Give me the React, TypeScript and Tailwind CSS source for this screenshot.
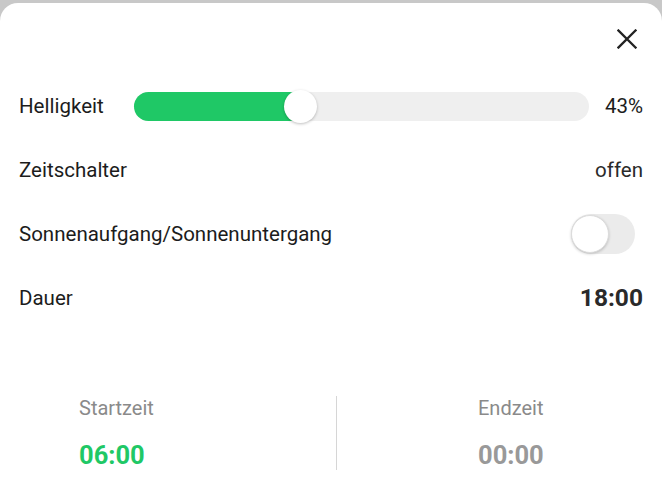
import React from "react";

export default function App() {
  return (
    <div className="w-[662px] h-[500px] bg-[#c8c8c8] pt-[3px] overflow-hidden" style={{ fontFamily: "Roboto, 'Noto Sans', sans-serif" }}>
      <div className="bg-white h-[497px] rounded-t-[18px] flex flex-col">
        <div className="h-[71px] flex justify-end items-start pt-[26px] pr-[25px]">
          <svg width="20" height="20" viewBox="0 0 20 20">
            <path d="M1.5 1.5 L18.5 18.5 M18.5 1.5 L1.5 18.5" stroke="#222" strokeWidth="2.3" strokeLinecap="square" />
          </svg>
        </div>
        <div className="h-[64px] flex items-center pl-[19px] pr-[19px]">
          <span className="text-[20.5px] text-[#1c1c1c] w-[115px]">Helligkeit</span>
          <div className="relative h-[29px] w-[455px] rounded-full bg-[#efefef]">
            <div className="absolute left-0 top-0 h-[29px] w-[170px] rounded-full bg-[#1fc866]" />
            <div className="absolute left-[150px] top-[-2px] w-[33px] h-[33px] rounded-full bg-white shadow-[0_1px_3px_rgba(0,0,0,0.25)]" />
          </div>
          <span className="ml-auto text-[20.5px] text-[#1c1c1c]">43%</span>
        </div>
        <div className="h-[64px] flex items-center justify-between px-[19px]">
          <span className="text-[20.5px] text-[#1c1c1c]">Zeitschalter</span>
          <span className="text-[20.5px] text-[#2a2a2a]">offen</span>
        </div>
        <div className="h-[64px] flex items-center justify-between pl-[19px] pr-[27px]">
          <span className="text-[20.5px] text-[#1c1c1c]">Sonnenaufgang/Sonnenuntergang</span>
          <div className="relative w-[64px] h-[40px] rounded-full bg-[#ebebeb]">
            <div className="absolute left-0 top-[1px] w-[38px] h-[38px] rounded-full bg-white border border-[#dcdcdc] shadow-[0_1px_3px_rgba(0,0,0,0.2)]" />
          </div>
        </div>
        <div className="h-[64px] flex items-center justify-between px-[19px]">
          <span className="text-[20.5px] text-[#1c1c1c]">Dauer</span>
          <span className="text-[24.5px] font-bold text-[#2a2a2a]">18:00</span>
        </div>
        <div className="mt-[66px] h-[74px] flex">
          <div className="w-[336px] pl-[79px] flex flex-col">
            <span className="text-[20px] leading-[24px] text-[#8a8a8a]">Startzeit</span>
            <span className="mt-[20px] text-[25.5px] leading-[30px] font-bold text-[#1fc866]">06:00</span>
          </div>
          <div className="w-px bg-[#d6d6d6]" />
          <div className="pl-[141px] flex flex-col">
            <span className="text-[20px] leading-[24px] text-[#8a8a8a]">Endzeit</span>
            <span className="mt-[20px] text-[25.5px] leading-[30px] font-bold text-[#999999]">00:00</span>
          </div>
        </div>
      </div>
    </div>
  );
}
